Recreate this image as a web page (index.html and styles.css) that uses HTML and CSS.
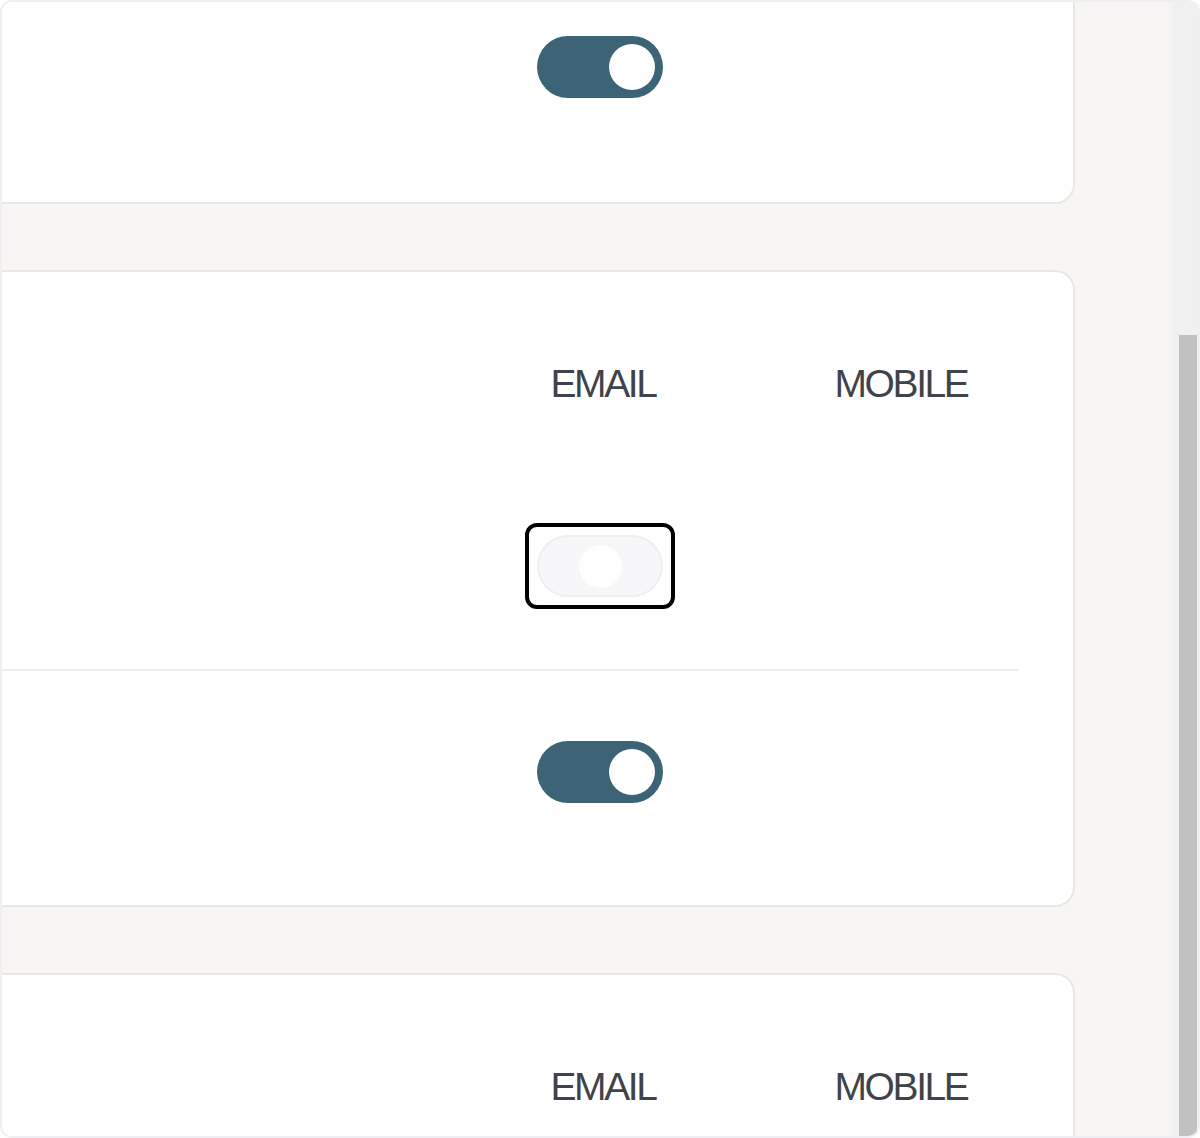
FILE: index.html
```html
<!DOCTYPE html>
<html lang="en">
<head>
  <meta charset="UTF-8" />
  <meta name="viewport" content="width=device-width, initial-scale=1.0"/>
  <title>Notification settings</title>
  <link rel="stylesheet" href="styles.css">
</head>
<body>
  <div class="frame">
    <main class="content">

      <!-- Card: single toggle (top cut off) -->
      <section class="card card-first">
        <div class="row">
          <div class="cell"></div>
          <div class="cell switch-cell">
            <span class="toggle on"><span class="knob"></span></span>
          </div>
          <div class="cell"></div>
        </div>
      </section>

      <!-- Card: email / mobile -->
      <section class="card">
        <div class="row head">
          <div class="cell"></div>
          <div class="cell label">EMAIL</div>
          <div class="cell label">MOBILE</div>
        </div>
        <div class="row">
          <div class="cell"></div>
          <div class="cell switch-cell">
            <span class="focus-ring">
              <span class="toggle off"><span class="knob"></span></span>
            </span>
          </div>
          <div class="cell"></div>
        </div>
        <hr class="divider">
        <div class="row">
          <div class="cell"></div>
          <div class="cell switch-cell">
            <span class="toggle on"><span class="knob"></span></span>
          </div>
          <div class="cell"></div>
        </div>
      </section>

      <!-- Card: email / mobile (bottom cut off) -->
      <section class="card">
        <div class="row head">
          <div class="cell"></div>
          <div class="cell label">EMAIL</div>
          <div class="cell label">MOBILE</div>
        </div>
        <div class="row"></div>
      </section>

    </main>

    <div class="scroll-track">
      <div class="scroll-thumb"></div>
    </div>
  </div>
</body>
</html>
```

FILE: styles.css
```css
:root {
  --page-bg: #f7f6f4;
  --card-border: #e8e7e0;
  --divider: #efeee8;
  --frame: #efeff3;
  --teal: #3d6376;
  --text: #41434a;
}

* {
  box-sizing: border-box;
}

html, body {
  margin: 0;
  height: 100%;
  overflow: hidden;
}

body {
  font-family: 'Liberation Sans', Arial, sans-serif;
  background: #fff;
  color: var(--text);
}

.frame {
  display: flex;
  width: 1200px;
  height: 1138px;
  border: 2px solid var(--frame);
  border-radius: 12px;
  overflow: hidden;
}

.content {
  flex: 1;
  display: flex;
  flex-direction: column;
  gap: 66px;
  padding-right: 93px;
  background: var(--page-bg);
  overflow: hidden;
}

.card {
  flex-shrink: 0;
  background: #fff;
  border: 2px solid var(--card-border);
  border-left: none;
  border-radius: 0 20px 20px 0;
  padding: 30px 0;
}

.card-first {
  margin-top: -68px;
  padding-bottom: 32px;
}

.row {
  display: grid;
  grid-template-columns: 1fr 298px 298px;
  align-items: center;
  height: 204px;
  padding-right: 23px;
}

.row.head {
  height: 163px;
}

.cell {
  display: flex;
  justify-content: center;
  align-items: center;
}

.switch-cell {
  padding-right: 7px;
  margin-top: -2px;
}

.label {
  font-size: 39px;
  letter-spacing: -2.4px;
  line-height: 1;
}

.divider {
  border: none;
  height: 2px;
  margin: 0 54px 0 0;
  background: var(--divider);
}

/* toggles */
.toggle {
  display: flex;
  align-items: center;
  width: 126px;
  height: 62px;
  border-radius: 31px;
  padding: 8px;
}

.toggle .knob {
  width: 46px;
  height: 46px;
  border-radius: 50%;
  background: #fff;
}

.toggle.on {
  background: var(--teal);
  justify-content: flex-end;
}

.toggle.off {
  background: #f7f7f9;
  border: 2px solid #efeff3;
  justify-content: center;
}

.toggle.off .knob {
  width: 43px;
  height: 43px;
  margin-left: 2px;
}

.focus-ring {
  display: inline-flex;
  padding: 8px;
  border: 4px solid #000;
  border-radius: 12px;
}

/* scrollbar */
.scroll-track {
  width: 30px;
  display: flex;
  flex-direction: column;
  padding: 333px 1px 0 7px;
  background: #f0f0f0;
  border-left: 4px solid #f4f4f4;
}

.scroll-thumb {
  flex: 1;
  background: #c1c1c1;
}
```
